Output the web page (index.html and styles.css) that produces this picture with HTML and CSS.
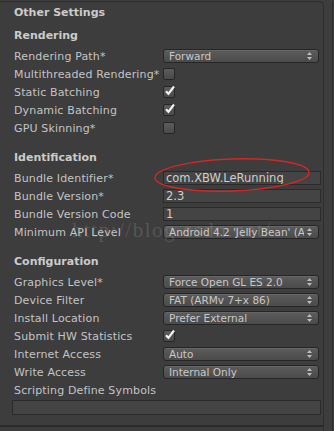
FILE: index.html
```html
<!DOCTYPE html>
<html>
<head>
  <title>Player Settings - Other Settings</title>
  <link rel="stylesheet" href="styles.css">
</head>
<body>
  <div class="inspector">
    <div class="frame">
      <div class="panel-title">Other Settings</div>

      <!-- Rendering -->
      <div class="group first">
        <div class="group-title">Rendering</div>
        <div class="row">
          <span class="label">Rendering Path*</span>
          <div class="popup"><span>Forward</span><svg class="arrows" width="5" height="8" viewBox="0 0 5 8"><path d="M2.5 0L5 3H0z M2.5 8L5 5H0z"/></svg></div>
        </div>
        <div class="row">
          <span class="label">Multithreaded Rendering*</span>
          <div class="toggle"></div>
        </div>
        <div class="row">
          <span class="label">Static Batching</span>
          <div class="toggle on"><svg width="12" height="12" viewBox="0 0 12 12"><path d="M2 6.2l2.4 2.6L10 1.5" /></svg></div>
        </div>
        <div class="row">
          <span class="label">Dynamic Batching</span>
          <div class="toggle on"><svg width="12" height="12" viewBox="0 0 12 12"><path d="M2 6.2l2.4 2.6L10 1.5" /></svg></div>
        </div>
        <div class="row">
          <span class="label">GPU Skinning*</span>
          <div class="toggle"></div>
        </div>
      </div>

      <!-- Identification -->
      <div class="group">
        <div class="group-title">Identification</div>
        <div class="row">
          <span class="label">Bundle Identifier*</span>
          <div class="field">com.XBW.LeRunning</div>
        </div>
        <div class="row">
          <span class="label">Bundle Version*</span>
          <div class="field">2.3</div>
        </div>
        <div class="row">
          <span class="label">Bundle Version Code</span>
          <div class="field">1</div>
        </div>
        <div class="row">
          <span class="label">Minimum API Level</span>
          <div class="popup"><span>Android 4.2 'Jelly Bean' (API level 17)</span><svg class="arrows" width="5" height="8" viewBox="0 0 5 8"><path d="M2.5 0L5 3H0z M2.5 8L5 5H0z"/></svg></div>
        </div>
      </div>

      <!-- Configuration -->
      <div class="group">
        <div class="group-title">Configuration</div>
        <div class="row">
          <span class="label">Graphics Level*</span>
          <div class="popup"><span>Force Open GL ES 2.0</span><svg class="arrows" width="5" height="8" viewBox="0 0 5 8"><path d="M2.5 0L5 3H0z M2.5 8L5 5H0z"/></svg></div>
        </div>
        <div class="row">
          <span class="label">Device Filter</span>
          <div class="popup"><span>FAT (ARMv 7+x 86)</span><svg class="arrows" width="5" height="8" viewBox="0 0 5 8"><path d="M2.5 0L5 3H0z M2.5 8L5 5H0z"/></svg></div>
        </div>
        <div class="row">
          <span class="label">Install Location</span>
          <div class="popup"><span>Prefer External</span><svg class="arrows" width="5" height="8" viewBox="0 0 5 8"><path d="M2.5 0L5 3H0z M2.5 8L5 5H0z"/></svg></div>
        </div>
        <div class="row">
          <span class="label">Submit HW Statistics</span>
          <div class="toggle on"><svg width="12" height="12" viewBox="0 0 12 12"><path d="M2 6.2l2.4 2.6L10 1.5" /></svg></div>
        </div>
        <div class="row">
          <span class="label">Internet Access</span>
          <div class="popup"><span>Auto</span><svg class="arrows" width="5" height="8" viewBox="0 0 5 8"><path d="M2.5 0L5 3H0z M2.5 8L5 5H0z"/></svg></div>
        </div>
        <div class="row">
          <span class="label">Write Access</span>
          <div class="popup"><span>Internal Only</span><svg class="arrows" width="5" height="8" viewBox="0 0 5 8"><path d="M2.5 0L5 3H0z M2.5 8L5 5H0z"/></svg></div>
        </div>
        <div class="row">
          <span class="label">Scripting Define Symbols</span>
        </div>
        <div class="symbols"></div>
      </div>

      <div class="divider"></div>
    </div>
  </div>

  <!-- annotation + watermark from the original screenshot -->
  <svg class="annotation" width="334" height="431" viewBox="0 0 334 431">
    <ellipse cx="232" cy="175" rx="77" ry="16" transform="rotate(-2 232 175)" />
  </svg>
  <div class="watermark">http://blog.csdn.net/</div>
</body>
</html>
```

FILE: styles.css
```css
body {
  margin: 0;
  background-color: #3d3d3d;
  font-family: "DejaVu Sans", "Liberation Sans", sans-serif;
  font-size: 11px;
  color: #c4c4c4;
  overflow: hidden;
  height: 431px;
  position: relative;
}
.inspector {
  width: 333px;
  height: 431px;
  border-right: 1px solid #2c2c2c;
  box-sizing: border-box;
}
.frame {
  margin-top: 1px;
  width: 324px;
  border-top: 1px solid #2e2e2e;
  border-right: 1px solid #2e2e2e;
  border-top-right-radius: 5px;
  padding-left: 14px;
  box-sizing: border-box;
  height: 430px;
}
.panel-title {
  margin-top: 2px;
  height: 18px;
  line-height: 18px;
  font-weight: bold;
  color: #cbcbcb;
}
.group {
  margin-top: 12px;
}
.group.first {
  margin-top: 5px;
}
.group-title {
  height: 18px;
  line-height: 18px;
  margin-bottom: 2px;
  font-weight: bold;
  color: #cbcbcb;
}
.row {
  display: flex;
  align-items: center;
  height: 18px;
}
.label {
  width: 149px;
  flex: none;
  white-space: nowrap;
  letter-spacing: 0.15px;
}
.popup {
  width: 156px;
  height: 14px;
  box-sizing: border-box;
  display: flex;
  align-items: center;
  padding: 0 6px 0 5px;
  border: 1px solid #262626;
  border-radius: 3px;
  background: linear-gradient(#5c5c5c, #4b4b4b);
  box-shadow: inset 0 1px 0 #666;
  color: #c8c8c8;
  font-size: 10.5px;
  letter-spacing: 0;
  overflow: hidden;
  white-space: nowrap;
}
.popup span {
  flex: 1;
  overflow: hidden;
}
.arrows {
  flex: none;
  margin-left: 3px;
  fill: #bdbdbd;
}
.toggle {
  width: 12px;
  height: 12px;
  box-sizing: border-box;
  border: 1px solid #262626;
  border-radius: 2px;
  background: linear-gradient(#5c5c5c, #4a4a4a);
  position: relative;
}
.toggle svg {
  position: absolute;
  left: 0;
  top: -2px;
  fill: none;
  stroke: #f2f2f2;
  stroke-width: 2.2;
}
.field {
  width: 158px;
  height: 14px;
  box-sizing: border-box;
  border: 1px solid #2a2a2a;
  background-color: #444;
  padding-left: 2px;
  font-size: 11.5px;
  line-height: 12px;
  letter-spacing: 0;
  color: #cfcfcf;
  white-space: nowrap;
  overflow: hidden;
}
.symbols {
  margin-top: 1px;
  margin-left: -2px;
  width: 309px;
  height: 15px;
  box-sizing: border-box;
  border: 1px solid #2a2a2a;
  background-color: #444;
}
.divider {
  margin-top: 10px;
  margin-left: -14px;
  height: 2px;
  background-color: #2a2a2a;
}
.annotation {
  position: absolute;
  left: 0;
  top: 0;
  fill: none;
  stroke: #d42727;
  stroke-width: 1.4;
}
.watermark {
  position: absolute;
  left: 72px;
  top: 218px;
  font-family: "Liberation Serif", serif;
  font-size: 21px;
  letter-spacing: 1.5px;
  color: rgba(210, 210, 210, 0.18);
  white-space: nowrap;
}
```
